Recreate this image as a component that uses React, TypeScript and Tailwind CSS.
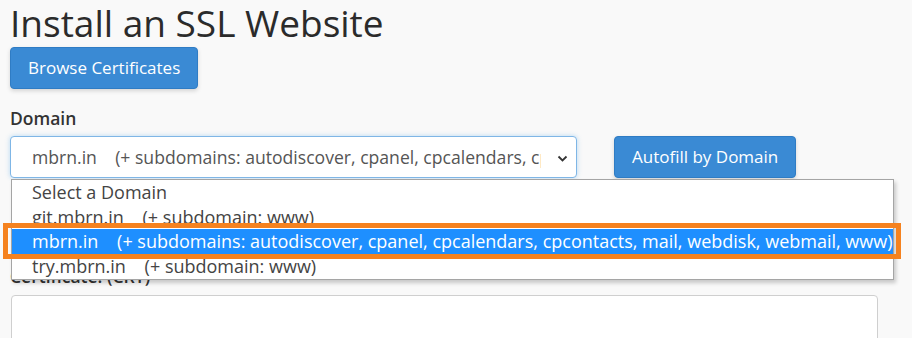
import React from 'react';

const font = { fontFamily: '"Open Sans", "Liberation Sans", sans-serif' };

const domains = [
  { name: 'git.mbrn.in', subs: '(+ subdomain: www)' },
  { name: 'mbrn.in', subs: '(+ subdomains: autodiscover, cpanel, cpcalendars, cpcontacts, mail, webdisk, webmail, www)' },
  { name: 'try.mbrn.in', subs: '(+ subdomain: www)' },
];

export default function App() {
  return (
    <div style={font} className="w-[912px] h-[338px] overflow-hidden bg-[#f9f9f9] text-[#333] px-[10px]">
      <h1 className="mt-[2px] text-[37px] leading-[41px] font-normal text-[#2b2b2b]">Install an SSL Website</h1>

      <button className="mt-[4px] h-[42px] px-[17px] rounded-[4px] bg-[#3a8ad4] border border-[#2f7cc4] text-white text-[17px] shadow-[0_2px_4px_rgba(0,0,0,0.15)]">
        Browse Certificates
      </button>

      <div className="mt-[17px] text-[17.5px] leading-[25px] font-semibold text-[#333]">Domain</div>

      <div className="relative mt-[5px] flex items-center gap-[37px]">
        <div className="relative w-[567px] h-[42px] bg-white border border-[#7fb6e6] rounded-[4px] shadow-[0_0_5px_rgba(102,175,233,0.45)] flex items-center pl-[21px] pr-[35px]">
          <div className="overflow-hidden whitespace-nowrap text-[17.6px] text-[#555]">
            mbrn.in&nbsp;&nbsp;&nbsp;&nbsp;(+ subdomains: autodiscover, cpanel, cpcalendars, cpcontacts, mail, webdisk, webmail, www)
          </div>
          <svg className="absolute right-[8px] top-[18px]" width="11" height="8" viewBox="0 0 11 8">
            <path d="M1.5 1.5 L5.5 5.5 L9.5 1.5" fill="none" stroke="#333" strokeWidth="1.8" />
          </svg>
        </div>
        <button className="h-[42px] px-[17px] rounded-[4px] bg-[#3a8ad4] border border-[#2f7cc4] text-white text-[17px] shadow-[0_2px_4px_rgba(0,0,0,0.15)]">
          Autofill by Domain
        </button>

        {/* open dropdown list */}
        <div className="absolute left-[1px] top-[43px] w-[883px] z-10 bg-white border border-[#a5a5a5] pb-[1px] shadow-[2px_3px_4px_rgba(0,0,0,0.2)] text-[18px] leading-[24.5px] text-[#444]">
          <div className="pl-[20px] whitespace-nowrap">Select a Domain</div>
          {domains.map((d) => (
            <div
              key={d.name}
              className={`pl-[20px] whitespace-nowrap ${d.name === 'mbrn.in' ? 'bg-[#1e8fff] text-white' : ''}`}
            >
              {d.name}&nbsp;&nbsp;&nbsp;&nbsp;{d.subs}
            </div>
          ))}
          <div className="absolute left-[-9px] top-[43px] w-[898px] h-[36px] border-[5px] border-[#f5821f]" />
        </div>
      </div>

      <div className="mt-[86px] text-[17.5px] leading-[25px] font-semibold text-[#333]">Certificate: (CRT)</div>
      <div className="mt-[6px] ml-[1px] w-[867px] h-[80px] bg-white border border-[#cfcfcf] rounded-[4px]" />
    </div>
  );
}
